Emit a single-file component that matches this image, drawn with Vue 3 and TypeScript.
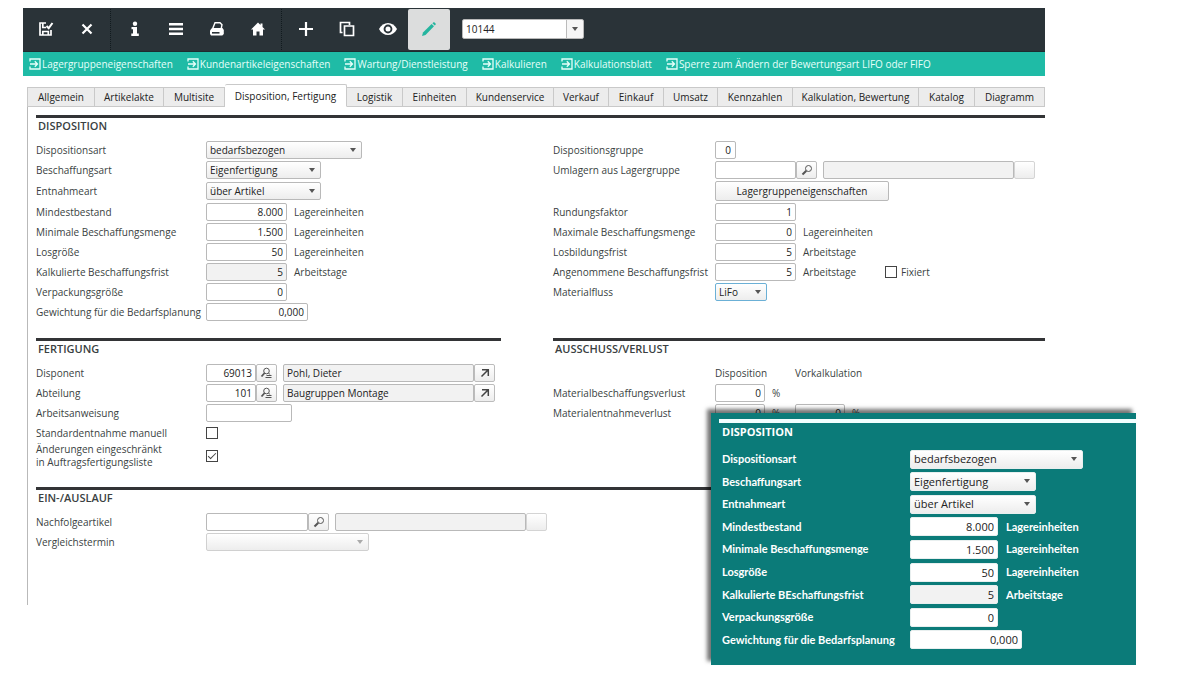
<script setup lang="ts">
import { ref } from 'vue'

interface FieldRow {
  id: string
  label: string
  kind: 'select' | 'input'
  value: string
  size: string
  unit?: string
  locked?: boolean
}

const baseRows: FieldRow[] = [
  { id: 'art', label: 'Dispositionsart', kind: 'select', value: 'bedarfsbezogen', size: 'w-wide' },
  { id: 'beschaffung', label: 'Beschaffungsart', kind: 'select', value: 'Eigenfertigung', size: 'w-mid' },
  { id: 'entnahme', label: 'Entnahmeart', kind: 'select', value: 'über Artikel', size: 'w-mid' },
  { id: 'mindest', label: 'Mindestbestand', kind: 'input', value: '8.000', size: 'w-num', unit: 'Lagereinheiten' },
  { id: 'minimal', label: 'Minimale Beschaffungsmenge', kind: 'input', value: '1.500', size: 'w-num', unit: 'Lagereinheiten' },
  { id: 'los', label: 'Losgröße', kind: 'input', value: '50', size: 'w-num', unit: 'Lagereinheiten' },
  { id: 'frist', label: 'Kalkulierte Beschaffungsfrist', kind: 'input', value: '5', size: 'w-num', unit: 'Arbeitstage', locked: true },
  { id: 'verpackung', label: 'Verpackungsgröße', kind: 'input', value: '0', size: 'w-num' },
  { id: 'gewichtung', label: 'Gewichtung für die Bedarfsplanung', kind: 'input', value: '0,000', size: 'w-dec' },
]

const zoomRows: FieldRow[] = baseRows.map((r) =>
  r.id === 'frist' ? { ...r, label: 'Kalkulierte BEschaffungsfrist' } : r,
)

const orderRows = [
  { id: 'rundung', label: 'Rundungsfaktor', value: '1', unit: '' },
  { id: 'maximal', label: 'Maximale Beschaffungsmenge', value: '0', unit: 'Lagereinheiten' },
  { id: 'losfrist', label: 'Losbildungsfrist', value: '5', unit: 'Arbeitstage' },
]

const people = [
  { id: 'disponent', label: 'Disponent', value: '69013', name: 'Pohl, Dieter' },
  { id: 'abteilung', label: 'Abteilung', value: '101', name: 'Baugruppen Montage' },
]

const links = [
  'Lagergruppeneigenschaften',
  'Kundenartikeleigenschaften',
  'Wartung/Dienstleistung',
  'Kalkulieren',
  'Kalkulationsblatt',
  'Sperre zum Ändern der Bewertungsart LIFO oder FIFO',
]

const tabs = [
  'Allgemein', 'Artikelakte', 'Multisite', 'Disposition, Fertigung', 'Logistik', 'Einheiten', 'Kundenservice',
  'Verkauf', 'Einkauf', 'Umsatz', 'Kennzahlen', 'Kalkulation, Bewertung', 'Katalog', 'Diagramm',
]
const activeTab = ref('Disposition, Fertigung')
const restricted = ref(true)
const manual = ref(false)
const fixed = ref(false)
</script>

<template>
  <div class="page">
    <div class="app">
      <header class="toolbar">
        <button class="tool" aria-label="Speichern">
          <svg width="16" height="16" viewBox="0 0 16 16" fill="none" stroke="#fff" stroke-width="1.700">
            <path d="M8 2H2v12h11V9M4.800 2v4.500H8M4.800 14v-3.500h5.500V14" />
            <path d="M8.500 5l2.200 2.200L14.500 2" stroke-width="2" />
          </svg>
        </button>
        <button class="tool" aria-label="Abbrechen">
          <svg width="16" height="16" viewBox="0 0 16 16" stroke="#fff" stroke-width="2.2"><path d="M3.500 3.500l9 9M12.500 3.500l-9 9" /></svg>
        </button>
        <span class="sep"></span>
        <button class="tool" aria-label="Information">
          <svg width="16" height="16" viewBox="0 0 16 16" fill="#fff"><circle cx="8" cy="2.800" r="2.200" /><path d="M4.500 6H10v6.500h1.800V15H4.300v-2.500H6V8.300H4.500z" /></svg>
        </button>
        <button class="tool" aria-label="Liste">
          <svg width="16" height="16" viewBox="0 0 16 16" stroke="#fff" stroke-width="2.4"><path d="M1 3.300h14M1 8h14M1 12.700h14" /></svg>
        </button>
        <button class="tool" aria-label="Drucken">
          <svg width="16" height="16" viewBox="0 0 16 16" fill="none" stroke="#fff" stroke-width="1.400">
            <path d="M3.500 8L6 1.700h5l2 2-.8 4" />
            <path d="M1 9.500L3 7h10.500l1.300 2v4l-1.500 1.500H2L1 13z" fill="#fff" stroke="none" />
            <path d="M3 11.800h7.500" stroke="#2a3338" stroke-width="1.600" />
          </svg>
        </button>
        <button class="tool" aria-label="Startseite">
          <svg width="16" height="16" viewBox="0 0 16 16" fill="#fff"><path d="M8 1.500L1 8.500h2V14.500h3.500v-4h3v4H13v-6h2l-2.500-2.500V2.500h-2V4z" /></svg>
        </button>
        <span class="sep"></span>
        <button class="tool" aria-label="Neu">
          <svg width="16" height="16" viewBox="0 0 16 16" stroke="#fff" stroke-width="2.200"><path d="M8 1v14M1 8h14" /></svg>
        </button>
        <button class="tool" aria-label="Kopieren">
          <svg width="16" height="16" viewBox="0 0 16 16" fill="none" stroke="#fff" stroke-width="1.700"><path d="M3.500 11.500H1.500v-10h9v2.500" /><path d="M5.500 5h9v9.500h-9z" /></svg>
        </button>
        <button class="tool" aria-label="Ansicht">
          <svg width="18" height="14" viewBox="0 0 18 14">
            <path d="M0 7c4-8 14-8 18 0-4 8-14 8-18 0z" fill="#fff" />
            <circle cx="9" cy="7" r="4.400" fill="#2a3338" /><circle cx="9" cy="7" r="2.500" fill="#fff" />
          </svg>
        </button>
        <button class="tool on" aria-label="Bearbeiten">
          <svg width="16" height="16" viewBox="0 0 16 16" fill="#25b59f"><path d="M1 15l1-3.500L10.600 3 13 5.300 4.500 14z" /><path d="M11.400 2.200L13 1l2 2-1.200 1.600z" /></svg>
        </button>
        <span class="pick number">
          <select aria-label="Artikelnummer"><option>10144</option></select>
        </span>
      </header>

      <nav class="links">
        <a v-for="l in links" :key="l" href="#">
          <svg width="12" height="12" viewBox="0 0 12 12" fill="none" stroke="#e6fffa" stroke-width="1.300">
            <path d="M1 3.500V1h10v10H1V8.500M1 6h7.500M5.800 3.200L8.500 6 5.800 8.800" />
          </svg>
          <span>{{ l }}</span>
        </a>
      </nav>

      <div class="tabs" role="tablist">
        <button
          v-for="t in tabs"
          :key="t"
          role="tab"
          class="tab"
          :class="{ active: t === activeTab }"
          :aria-selected="t === activeTab"
          @click="activeTab = t"
        >{{ t }}</button>
      </div>

      <main class="panel">
        <section class="block first">
          <h2>DISPOSITION</h2>
          <div class="cols">
            <div class="form">
              <div v-for="(r, i) in baseRows" :key="r.id" class="row" :class="{ tall: i === 2 }">
                <label :for="r.id">{{ r.label }}</label>
                <span v-if="r.kind === 'select'" class="pick" :class="r.size">
                  <select :id="r.id"><option>{{ r.value }}</option></select>
                </span>
                <input v-else :id="r.id" class="field num" :class="r.size" :value="r.value" :readonly="r.locked" />
                <span v-if="r.unit" class="unit">{{ r.unit }}</span>
              </div>
            </div>
            <div class="form right">
              <div class="row">
                <label for="gruppe">Dispositionsgruppe</label>
                <input id="gruppe" class="field num w-digit" value="0" />
              </div>
              <div class="row">
                <label for="umlagern">Umlagern aus Lagergruppe</label>
                <input id="umlagern" class="field w-num" />
                <button class="mini" aria-label="Lagergruppe suchen">
                  <svg width="12" height="12" viewBox="0 0 12 12" fill="none" stroke="#555"><circle cx="7.500" cy="4.500" r="3" /><path d="M5.300 6.700L1.500 10.500" stroke-width="2" /></svg>
                </button>
                <input class="field name" aria-label="Name der Lagergruppe" readonly />
                <button class="mini blank" aria-label="Lagergruppe öffnen" disabled></button>
              </div>
              <div class="row tall">
                <span></span>
                <button class="wide-btn">Lagergruppeneigenschaften</button>
              </div>
              <div v-for="r in orderRows" :key="r.id" class="row">
                <label :for="r.id">{{ r.label }}</label>
                <input :id="r.id" class="field num w-num" :value="r.value" />
                <span v-if="r.unit" class="unit">{{ r.unit }}</span>
              </div>
              <div class="row">
                <label for="angenommen">Angenommene Beschaffungsfrist</label>
                <input id="angenommen" class="field num w-num" value="5" />
                <span class="unit days">Arbeitstage</span>
                <input id="fixiert" v-model="fixed" type="checkbox" class="check" />
                <label for="fixiert" class="after">Fixiert</label>
              </div>
              <div class="row">
                <label for="fluss">Materialfluss</label>
                <span class="pick focus w-short"><select id="fluss"><option>LiFo</option></select></span>
              </div>
            </div>
          </div>
        </section>

        <div class="cols">
          <section class="block second">
            <h2>FERTIGUNG</h2>
            <div class="form">
              <div v-for="p in people" :key="p.id" class="row">
                <label :for="p.id">{{ p.label }}</label>
                <input :id="p.id" class="field num w-code" :value="p.value" />
                <button class="mini" :aria-label="p.label + ' suchen'">
                  <svg width="13" height="12" viewBox="0 0 13 12" fill="none" stroke="#555"><circle cx="6.500" cy="4" r="2.800" /><path d="M4.600 6L1.500 9.500" stroke-width="1.800" /><path d="M6.500 8.500h5M5.500 10.500h6M8.700 6l1 1.500" /></svg>
                </button>
                <input class="field name" :aria-label="p.label + ' Name'" :value="p.name" readonly />
                <button class="mini" :aria-label="p.label + ' öffnen'">
                  <svg width="12" height="12" viewBox="0 0 12 12" fill="none" stroke="#444" stroke-width="1.500"><path d="M2.500 9.500l6.500-6.500M3 2.800h6.300V9" /></svg>
                </button>
              </div>
              <div class="row">
                <label for="anweisung">Arbeitsanweisung</label>
                <input id="anweisung" class="field w-text" />
              </div>
              <div class="row">
                <label for="manuell">Standardentnahme manuell</label>
                <input id="manuell" v-model="manual" type="checkbox" class="check" />
              </div>
              <div class="row double">
                <label for="eingeschraenkt">Änderungen eingeschränkt<br />in Auftragsfertigungsliste</label>
                <input id="eingeschraenkt" v-model="restricted" type="checkbox" class="check" />
              </div>
            </div>
          </section>
          <section class="block second">
            <h2>AUSSCHUSS/VERLUST</h2>
            <div class="form right">
              <div class="row">
                <span></span>
                <span class="colhead">Disposition</span>
                <span>Vorkalkulation</span>
              </div>
              <div class="row">
                <label for="verlust1">Materialbeschaffungsverlust</label>
                <input id="verlust1" class="field num w-code" value="0" />
                <span class="unit">%</span>
              </div>
              <div class="row">
                <label for="verlust2">Materialentnahmeverlust</label>
                <input id="verlust2" class="field num w-code" value="0" />
                <span class="unit pct">%</span>
                <input class="field num w-code" aria-label="Materialentnahmeverlust Vorkalkulation" value="0" />
                <span class="unit">%</span>
              </div>
            </div>
          </section>
        </div>

        <section class="block third">
          <h2>EIN-/AUSLAUF</h2>
          <div class="form">
            <div class="row">
              <label for="nachfolge">Nachfolgeartikel</label>
              <input id="nachfolge" class="field w-dec" />
              <button class="mini" aria-label="Nachfolgeartikel suchen">
                <svg width="12" height="12" viewBox="0 0 12 12" fill="none" stroke="#555"><circle cx="7.500" cy="4.500" r="3" /><path d="M5.300 6.700L1.500 10.500" stroke-width="2" /></svg>
              </button>
              <input class="field name" aria-label="Name des Nachfolgeartikels" readonly />
              <button class="mini blank" aria-label="Nachfolgeartikel öffnen" disabled></button>
            </div>
            <div class="row">
              <label for="termin">Vergleichstermin</label>
              <span class="pick off w-date"><select id="termin" disabled></select></span>
            </div>
          </div>
        </section>
      </main>
    </div>

    <aside class="lens">
      <h2>DISPOSITION</h2>
      <div class="form">
        <div v-for="r in zoomRows" :key="r.id" class="row">
          <label :for="'z-' + r.id">{{ r.label }}</label>
          <span v-if="r.kind === 'select'" class="pick" :class="r.size">
            <select :id="'z-' + r.id"><option>{{ r.value }}</option></select>
          </span>
          <input v-else :id="'z-' + r.id" class="field num" :class="r.size" :value="r.value" :readonly="r.locked" />
          <span v-if="r.unit" class="unit">{{ r.unit }}</span>
        </div>
      </div>
    </aside>
  </div>
</template>

<style>
body {
  background: #fff;
}
</style>

<style scoped>
.page {
  position: relative;
  box-sizing: border-box;
  min-height: 100vh;
  padding: 8px 133px 24px 23px;
  font: 10px/14px 'Open Sans', 'Noto Sans', sans-serif;
  color: #3a3f42;
}
.page *,
.page *::after {
  box-sizing: border-box;
}
button,
input,
select {
  font: inherit;
  color: #222;
  margin: 0;
}
.toolbar {
  display: flex;
  align-items: center;
  height: 44px;
  padding: 0 2px 1px;
  background: #2a3338;
  border-bottom: 1px solid #1d2c30;
}
.tool {
  display: flex;
  align-items: center;
  justify-content: center;
  width: 41px;
  height: 41px;
  padding: 0;
  border: 0;
  background: none;
}
.tool.on {
  width: 42px;
  background: #dcdddd;
  border-radius: 2px;
}
.sep {
  height: 41px;
  margin: 0 3px;
  border-left: 1px dotted #111a1e;
}
.links {
  display: flex;
  align-items: center;
  gap: 14px;
  height: 24px;
  padding: 0 6px;
  background: #1fbba6;
}
.links a {
  display: flex;
  align-items: center;
  gap: 1px;
  color: #e6fffa;
  text-decoration: none;
  white-space: nowrap;
}
.tabs {
  display: grid;
  grid-template-columns: 68fr 69fr 61fr 122fr 56fr 64fr 87fr 55fr 55fr 54fr 75fr 126fr 56fr 70fr;
  align-items: end;
  margin: 8px 0 0 4px;
}
.tab {
  height: 20px;
  padding: 0;
  border: 1px solid #c9c9c9;
  border-left-width: 0;
  background: #ececec;
  white-space: nowrap;
}
.tab:first-child {
  border-left-width: 1px;
}
.tab.active {
  height: 23px;
  background: #fff;
  border-bottom-color: #fff;
  border-radius: 2px 2px 0 0;
}
.panel {
  min-height: 498px;
  margin-left: 4px;
  padding: 8px 0 0 8px;
  border-left: 1px solid #b9b9b9;
}
.block {
  border-top: 3px solid #333436;
}
.first {
  min-height: 223px;
}
.second {
  min-height: 149px;
}
h2 {
  margin: 0;
  padding: 1px 2px;
  font-size: 11px;
  line-height: 14px;
  font-weight: 600;
}
.cols {
  display: grid;
  grid-template-columns: 465fr 492fr;
  column-gap: 52px;
}
.form {
  padding-top: 6px;
}
.row {
  display: grid;
  grid-template-columns: 170px;
  grid-auto-columns: max-content;
  grid-auto-flow: column;
  align-items: center;
  height: 20px;
  white-space: nowrap;
}
.right .row {
  grid-template-columns: 162px;
}
.row.tall {
  height: 22px;
}
.row.double {
  height: 26px;
  line-height: 13px;
}
.unit {
  padding-left: 7px;
}
.days {
  width: 89px;
}
.pct {
  width: 30px;
}
.colhead {
  width: 80px;
}
.after {
  padding-left: 4px;
}
.field {
  height: 18px;
  padding: 0 3px;
  border: 1px solid #b9b9b9;
  border-radius: 2px;
  background: #fff;
}
.field[readonly] {
  background: #f2f2f2;
}
.num {
  text-align: right;
}
.w-digit { width: 21px; }
.w-digit.num { padding-right: 4px; }
.w-code { width: 50px; }
.w-short { width: 52px; }
.w-num { width: 81px; }
.w-text { width: 86px; }
.w-dec { width: 102px; }
.w-mid { width: 115px; }
.w-wide { width: 156px; }
.w-date { width: 163px; }
.name {
  width: 191px;
  margin-left: 6px;
}
.mini {
  display: flex;
  align-items: center;
  justify-content: center;
  width: 21px;
  height: 18px;
  padding: 0;
  border: 1px solid #bcbcbc;
  border-radius: 2px;
  background: linear-gradient(#fff, #ededed);
}
.mini.blank {
  border-color: #d4d4d4;
}
.wide-btn {
  width: 174px;
  height: 20px;
  padding: 0;
  border: 1px solid #b9b9b9;
  border-radius: 2px;
  background: linear-gradient(#fff, #ededed);
}
.check {
  display: grid;
  place-items: center;
  appearance: none;
  width: 12px;
  height: 12px;
  border: 1px solid #444;
  background: #fff;
}
.check:checked::after {
  content: '';
  width: 8px;
  height: 4px;
  margin-bottom: 2px;
  border: solid #444;
  border-width: 0 0 1px 1px;
  transform: rotate(-45deg);
}
.pick {
  position: relative;
  display: block;
}
.pick select {
  display: block;
  appearance: none;
  width: 100%;
  height: 18px;
  padding: 0 3px;
  border: 1px solid #b9b9b9;
  border-radius: 2px;
  background: linear-gradient(#fff, #ededed);
}
.pick::after {
  content: '';
  position: absolute;
  top: 7px;
  right: 6px;
  border: solid transparent;
  border-width: 4px 3px 0;
  border-top-color: #555;
  pointer-events: none;
}
.pick.focus select {
  border-color: #6bb0d6;
}
.pick.off select {
  opacity: 1;
  border-color: #d0d0d0;
}
.pick.off::after {
  border-top-color: #aaa;
}
.number {
  width: 122px;
  margin-left: 12px;
}
.number select {
  height: 20px;
  background: linear-gradient(90deg, #fff 103px, #bbb 103px, #bbb 104px, #f6f6f6 104px);
}
.number::after {
  top: 8px;
}
.lens {
  position: absolute;
  top: 413px;
  right: 42px;
  width: 425px;
  padding: 6px 0 14px 8px;
  background: #0b7b79;
  color: #fff;
  box-shadow: -4px -4px 4px rgba(0, 0, 0, 0.55);
}
.lens h2 {
  padding: 1px 3px;
  border-top: 4px solid #f2ffff;
  font-size: 11px;
  line-height: 16px;
  font-weight: 700;
}
.lens .form {
  display: grid;
  grid-template-rows: repeat(9, 1fr);
  height: 203px;
  margin-top: 7px;
  padding: 0 0 0 3px;
}
.lens .row {
  grid-template-columns: 188px;
  height: auto;
  font-size: 11px;
}
.lens label,
.lens .unit {
  font-family: Lato, sans-serif;
  font-weight: 700;
}
.lens .unit {
  padding-left: 8px;
}
.lens .field,
.lens select {
  height: 19px;
  border-color: #e8efef;
}
.lens .w-num { width: 88px; }
.lens .w-dec { width: 112px; }
.lens .w-mid { width: 126px; }
.lens .w-wide { width: 173px; }
</style>
